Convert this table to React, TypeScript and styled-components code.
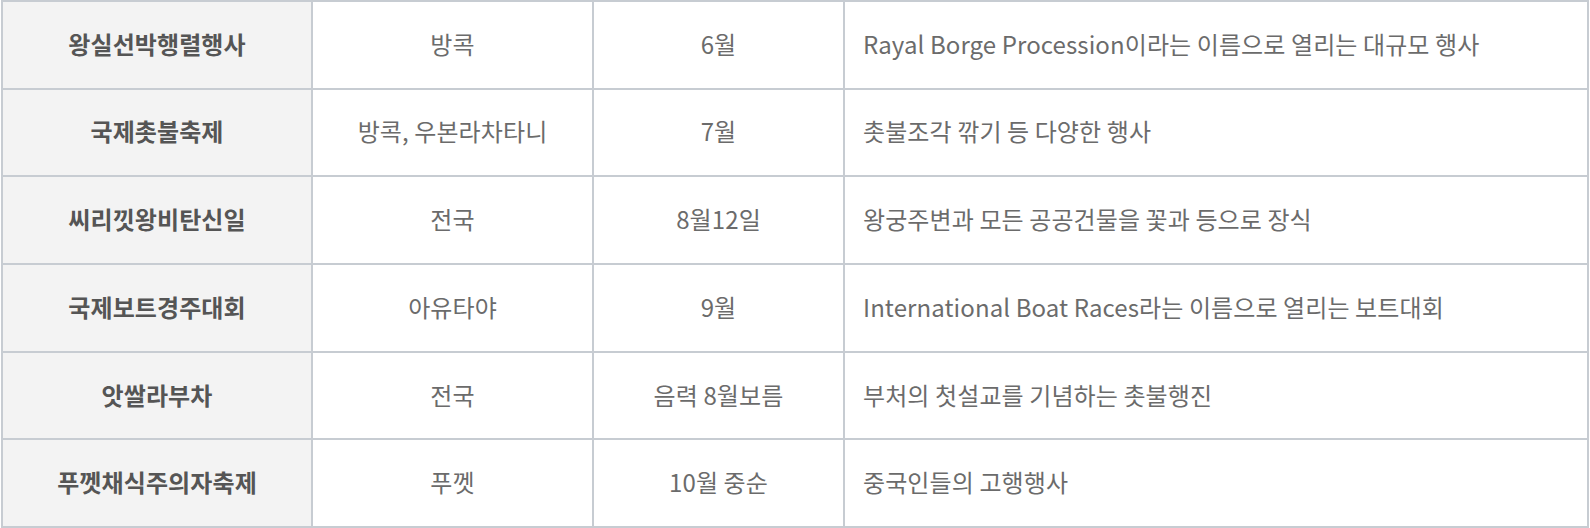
import React from 'react';
import styled, { createGlobalStyle } from 'styled-components';

const GlobalStyle = createGlobalStyle`
  html, body {
    margin: 0;
    padding: 0;
    background: #fff;
  }
  body {
    font-family: "Noto Sans CJK KR", "Noto Sans", sans-serif;
  }
`;

const Wrapper = styled.div`
  padding: 0 1px;
`;

const Table = styled.table`
  width: 1588px;
  border-collapse: collapse;
  table-layout: fixed;
  border: 2px solid #c7ccd2;
`;

const Row = styled.tr`
  height: 87.7px;
`;

const Cell = styled.td<{ $head?: boolean; $align?: 'left' | 'center' }>`
  border: 2px solid #c7ccd2;
  padding: 0 18px 3px;
  font-size: 24px;
  line-height: 1.3;
  letter-spacing: 0.1px;
  text-align: ${({ $align }) => $align || 'center'};
  color: ${({ $head }) => ($head ? '#555' : '#6b6b6b')};
  font-weight: ${({ $head }) => ($head ? 700 : 400)};
  background: ${({ $head }) => ($head ? '#f3f3f3' : '#fff')};
  white-space: nowrap;
`;

interface Event {
  name: string;
  place: string;
  date: string;
  desc: string;
}

const events: Event[] = [
  { name: '왕실선박행렬행사', place: '방콕', date: '6월', desc: 'Rayal Borge Procession이라는 이름으로 열리는 대규모 행사' },
  { name: '국제촛불축제', place: '방콕, 우본라차타니', date: '7월', desc: '촛불조각 깎기 등 다양한 행사' },
  { name: '씨리낏왕비탄신일', place: '전국', date: '8월12일', desc: '왕궁주변과 모든 공공건물을 꽃과 등으로 장식' },
  { name: '국제보트경주대회', place: '아유타야', date: '9월', desc: 'International Boat Races라는 이름으로 열리는 보트대회' },
  { name: '앗쌀라부차', place: '전국', date: '음력 8월보름', desc: '부처의 첫설교를 기념하는 촛불행진' },
  { name: '푸껫채식주의자축제', place: '푸껫', date: '10월 중순', desc: '중국인들의 고행행사' },
];

export default function App() {
  return (
    <Wrapper>
      <GlobalStyle />
      <Table>
        <colgroup>
          <col style={{ width: 310 }} />
          <col style={{ width: 281 }} />
          <col style={{ width: 251 }} />
          <col />
        </colgroup>
        <tbody>
          {events.map(ev => (
            <Row key={ev.name}>
              <Cell $head>{ev.name}</Cell>
              <Cell>{ev.place}</Cell>
              <Cell>{ev.date}</Cell>
              <Cell $align="left">{ev.desc}</Cell>
            </Row>
          ))}
        </tbody>
      </Table>
    </Wrapper>
  );
}
